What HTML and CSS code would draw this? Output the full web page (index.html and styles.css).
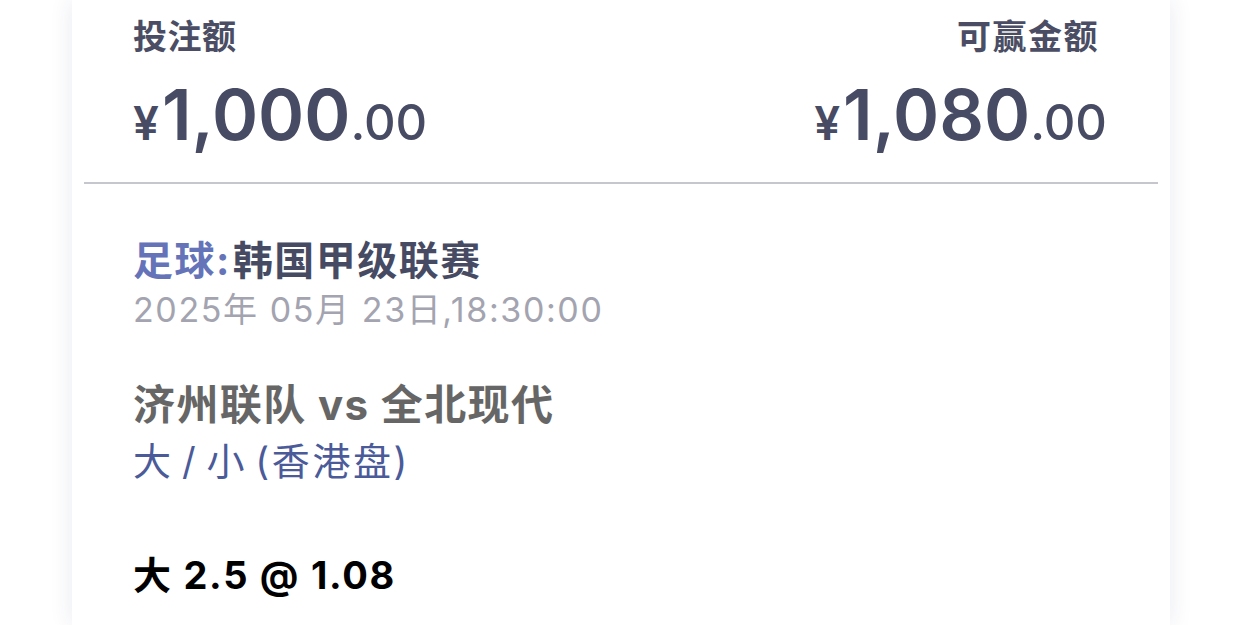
FILE: index.html
```html
<!DOCTYPE html>
<html>
<head>
  <meta charset="utf-8">
  <link rel="stylesheet" href="styles.css">
</head>
<body>
  <div class="page">
    <div class="ticket">
      <div class="summary">
        <div class="col">
          <p class="label">投注额</p>
          <p class="amount"><span class="cur">¥</span>1,000<span class="dec">.00</span></p>
        </div>
        <div class="col right">
          <p class="label">可赢金额</p>
          <p class="amount"><span class="cur">¥</span>1,080<span class="dec">.00</span></p>
        </div>
      </div>

      <div class="details">
        <p class="league"><span class="sport">足球:</span>韩国甲级联赛</p>
        <p class="date">2025年 05月 23日,18:30:00</p>
        <p class="teams">济州联队 vs 全北现代</p>
        <p class="market">大 / 小 (香港盘)</p>
        <p class="pick">大 2.5 @ 1.08</p>
      </div>
    </div>
  </div>
</body>
</html>
```

FILE: styles.css
```css
body {
  margin: 0;
  background: #fff;
  font-family: "Inter", "Noto Sans CJK SC", sans-serif;
}

p {
  margin: 0;
}

.page {
  padding: 0 72px;
}

.ticket {
  background: #fff;
  min-height: 625px;
  box-shadow: 0 0 22px rgba(40, 50, 110, 0.1);
}

/* stake / payout */
.summary {
  margin: 0 12px;
  padding: 17px 51px 19px 49px;
  display: flex;
  justify-content: space-between;
  border-bottom: 2px solid #c6c6cf;
}

.col.right {
  text-align: right;
}

.label {
  font-size: 34px;
  line-height: 40px;
  font-weight: 700;
  color: #4a4d63;
  letter-spacing: 0.5px;
}

.col.right .label {
  padding-right: 8px;
  letter-spacing: 1.5px;
}

.amount {
  margin-top: 18px;
  font-size: 70px;
  line-height: 80px;
  font-weight: 600;
  color: #474b63;
}

.amount .cur {
  font-size: 46px;
  margin-right: 3px;
}

.amount .dec {
  font-size: 49px;
  font-weight: 500;
}

/* match info */
.details {
  padding: 52px 61px 0;
}

.league {
  font-size: 40px;
  line-height: 50px;
  font-weight: 700;
  color: #464a62;
  letter-spacing: 1.5px;
}

.league .sport {
  color: #6574b8;
  margin-right: 2px;
}

.date {
  font-size: 34px;
  line-height: 48px;
  color: #a3a4b0;
  letter-spacing: 1.6px;
}

.teams {
  margin-top: 43px;
  font-size: 42px;
  line-height: 56px;
  font-weight: 700;
  color: #666;
  letter-spacing: 1.4px;
}

.market {
  font-size: 38px;
  line-height: 56px;
  color: #4b5b99;
  letter-spacing: 2.6px;
  word-spacing: -5px;
}

.pick {
  margin-top: 58px;
  font-size: 38px;
  line-height: 56px;
  font-weight: 700;
  color: #000;
  letter-spacing: 1.7px;
}
```
